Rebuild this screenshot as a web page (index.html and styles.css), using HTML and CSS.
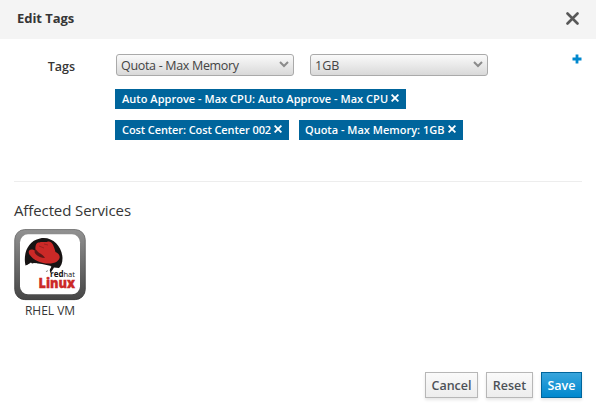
FILE: index.html
```html
<!DOCTYPE html>
<html lang="en">
<head>
<meta charset="utf-8">
<title>Edit Tags</title>
<link rel="stylesheet" href="styles.css">
</head>
<body>
<div class="modal">
  <header class="modal-header">
    <h1 class="modal-title">Edit Tags</h1>
    <button class="close" aria-label="Close"><svg width="13" height="13" viewBox="0 0 13 13"><path d="M1.500 1.500l10 10M11.500 1.500l-10 10" stroke="#585858" stroke-width="2.6" stroke-linecap="round"/></svg></button>
  </header>
  <main class="modal-body">
    <div class="form-row">
      <div class="form-label">Tags</div>
      <div class="fields">
        <div class="selects">
          <button class="select"><span class="t-category">Quota - Max Memory</span><svg width="10" height="7" viewBox="0 0 10 7"><path d="M1 1l4 4 4-4" fill="none" stroke="#8b8b8b" stroke-width="2"/></svg></button>
          <button class="select"><span>1GB</span><svg width="10" height="7" viewBox="0 0 10 7"><path d="M1 1l4 4 4-4" fill="none" stroke="#8b8b8b" stroke-width="2"/></svg></button>
        </div>
        <div class="tags">
          <span class="tag tag-cpu"><span>Auto Approve - Max CPU: Auto Approve - Max CPU</span><svg width="8" height="8" viewBox="0 0 8 8"><path d="M.6 .6l6.800 6.800M7.400 .6L.6 7.400" stroke="#fff" stroke-width="1.8"/></svg></span>
          <span class="tag tag-cost"><span>Cost Center: Cost Center 002</span><svg width="8" height="8" viewBox="0 0 8 8"><path d="M.6 .6l6.800 6.800M7.400 .6L.6 7.400" stroke="#fff" stroke-width="1.8"/></svg></span>
          <span class="tag tag-memory"><span>Quota - Max Memory: 1GB</span><svg width="8" height="8" viewBox="0 0 8 8"><path d="M.6 .6l6.800 6.800M7.400 .6L.6 7.400" stroke="#fff" stroke-width="1.8"/></svg></span>
        </div>
      </div>
      <button class="add" aria-label="Add"><svg width="10" height="10" viewBox="0 0 10 10"><path d="M5 .5v9M.5 5h9" stroke="#0088ce" stroke-width="2.8"/></svg></button>
    </div>
    <section class="services">
      <h2 class="services-title">Affected Services</h2>
      <div class="service">
        <svg class="service-icon" width="72" height="72" viewBox="0 0 72 72">
          <defs>
            <linearGradient id="frame" x1="0" y1="0" x2="0" y2="1"><stop offset="0" stop-color="#929292"/><stop offset="1" stop-color="#464646"/></linearGradient>
            <linearGradient id="edge" x1="0" y1="0" x2="0" y2="1"><stop offset="0" stop-color="#777"/><stop offset="1" stop-color="#383838"/></linearGradient>
          </defs>
          <rect x=".8" y=".6" width="70.4" height="70" rx="10" fill="url(#frame)" stroke="url(#edge)"/>
          <rect x="6" y="5.3" width="60" height="60" rx="8" fill="#fff"/>
          <path d="M11.500 36.500C9 26 13 12 26 9.500C38 7 48 17 48.500 29C48.500 34 47 37 45 39L40 38.500L36.500 44L35.500 41L37 37L28 35L20 34Z" fill="#171313"/>
          <path d="M11 37.500L17 33.500L20 37L22 34L26 38L33 38.500L37.500 37.500L35.500 41V50H27L24 44L19 41Z" fill="#fff"/>
          <path d="M30 41L32 42.200L34 41L33 43Z" fill="#555"/>
          <path d="M21.500 22C21 17 22 13 25.500 13.500C28 12 31 14 34 12.500C38 12 40 17 41.500 23C46 25 47.500 29 43 32.500C36 37 21 34 15.500 25.500C13 21 17 19 21.500 22Z" fill="#cb2927"/>
          <path d="M21.500 20C25 25 29 25 31 29C27 29 22 27 20.500 23Z" fill="#5b1717"/>
          <path d="M25 17L30 19M30 15L34 16" fill="none" stroke="#8e2020" stroke-width=".8"/>
          <text x="36" y="48" textLength="13.500" lengthAdjust="spacingAndGlyphs" class="logo-red">red</text>
          <text x="49.500" y="48" textLength="11.500" lengthAdjust="spacingAndGlyphs" class="logo-hat">hat</text>
          <text x="24.500" y="59" textLength="36.500" lengthAdjust="spacingAndGlyphs" class="logo-linux">Linux</text>
        </svg>
        <div class="service-name">RHEL VM</div>
      </div>
    </section>
  </main>
  <footer class="modal-footer">
    <button class="btn btn-cancel">Cancel</button>
    <button class="btn btn-reset">Reset</button>
    <button class="btn btn-save">Save</button>
  </footer>
</div>
</body>
</html>
```
FILE: styles.css
```css
* { box-sizing: border-box; }
body { margin: 0; background: #fff; color: #363636; font: 12px/18px "Open Sans", "Noto Sans", sans-serif; }
button { font: inherit; color: inherit; margin: 0; padding: 0; border: 0; background: none; }
svg { display: block; flex: none; }
.modal { width: 596px; height: 408px; display: flex; flex-direction: column; }
.modal-header { height: 39px; flex: none; display: flex; align-items: center; justify-content: space-between; padding: 0 17px 2px; background: #f4f4f4; }
.modal-title { margin: 0 0 2px; font-size: 13px; font-weight: 700; line-height: 18px; letter-spacing: -.05px; }
.modal-body { flex: 1; padding: 15px 14px 0; }
.form-row { display: flex; height: 128px; align-items: flex-start; border-bottom: 1px solid #ededed; }
.form-label { width: 61px; margin-right: 40px; padding-top: 4px; text-align: right; font-size: 12.5px; font-weight: 600; }
.fields { width: 375px; }
.selects { display: flex; gap: 16px; padding-left: 1px; }
.select { width: 178px; height: 22px; display: flex; align-items: center; justify-content: space-between; padding: 1px 4px 0; border: 1px solid #aaa; border-radius: 3px; background: linear-gradient(#fafafa, #d9d9d9); font-size: 12.5px; color: #444; }
.select svg { margin-top: -2px; }
.t-category { letter-spacing: -.32px; }
.tags { display: flex; flex-wrap: wrap; gap: 11px 10px; padding-top: 13px; }
.tag { display: flex; align-items: center; justify-content: space-between; height: 20px; padding: 0 7px; background: #00659c; color: #fff; font-size: 11px; font-weight: 600; white-space: nowrap; }
.tag svg { margin-top: -2px; }
.tag-cpu { width: 291px; margin-right: 60px; letter-spacing: .03px; }
.tag-cost { width: 174px; letter-spacing: -.09px; }
.tag-memory { width: 164px; padding-left: 6px; }
.add { margin: 0 0 0 auto; }
.services { padding-top: 18px; }
.services-title { margin: 0; font-size: 15px; font-weight: 400; line-height: 20px; letter-spacing: -.11px; }
.service { width: 72px; margin-top: 9px; text-align: center; }
.service-name { margin-top: 1px; }
.logo-red, .logo-hat { font: 700 8px "Open Sans", sans-serif; fill: #171313; }
.logo-hat { font-weight: 400; }
.logo-linux { font: 800 14px "Open Sans", sans-serif; fill: #cb2927; stroke: #cb2927; stroke-width: .4px; }
.modal-footer { display: flex; justify-content: flex-end; gap: 8px; padding: 0 14px 10px; }
.btn { height: 26px; padding-top: 1px; border: 1px solid #b7b7b7; background: linear-gradient(#fafafa, #ededed); box-shadow: 0 2px 3px rgba(3,3,3,.1); color: #4d5258; font-size: 12.5px; font-weight: 600; line-height: 23px; }
.btn-cancel { width: 53px; }
.btn-reset { width: 47px; }
.btn-save { width: 41px; border-color: #00659c; background: linear-gradient(#39a5dc, #0088ce); color: #fff; }
```
